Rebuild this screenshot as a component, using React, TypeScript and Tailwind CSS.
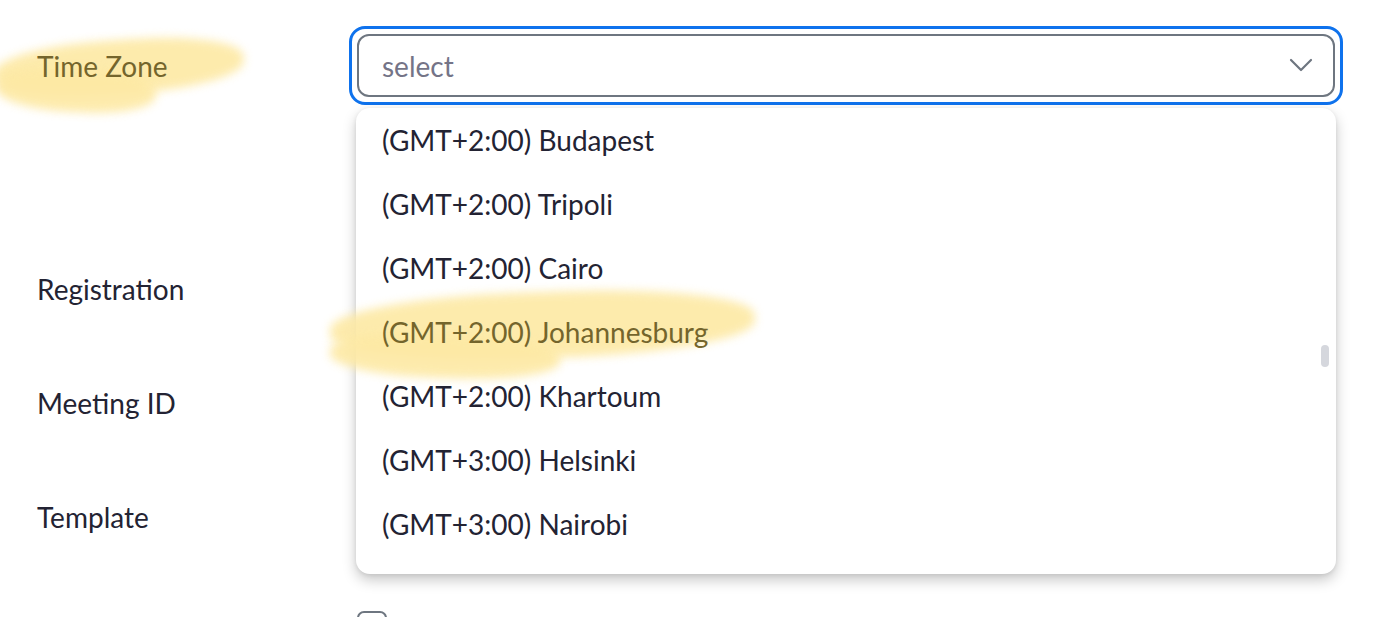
import React from 'react'

const options = [
  '(GMT+2:00) Budapest',
  '(GMT+2:00) Tripoli',
  '(GMT+2:00) Cairo',
  '(GMT+2:00) Johannesburg',
  '(GMT+2:00) Khartoum',
  '(GMT+3:00) Helsinki',
  '(GMT+3:00) Nairobi',
]

const Highlight = ({ className }: { className: string }) => (
  <div
    className={`absolute pointer-events-none rounded-[45%] bg-[#fde9a4] blur-[5px] opacity-90 ${className}`}
  />
)

export default function App() {
  return (
    <div className="relative h-[617px] w-[1400px] overflow-hidden bg-white font-['Lato','Liberation_Sans',sans-serif] text-[28px] text-[#232333]">
      {/* marker strokes behind the Time Zone label */}
      <Highlight className="left-[-6px] top-[40px] h-[54px] w-[250px] -rotate-[4deg]" />
      <Highlight className="left-[-4px] top-[68px] h-[44px] w-[160px] rotate-[3deg]" />

      <div className="relative pt-[26px]">
        {/* time zone row */}
        <div className="flex h-[78px] items-center">
          <div className="w-[349px] pl-[37px] pt-[2px]">
            <span className="text-[#74652c]">Time Zone</span>
          </div>
          <div className="relative w-[994px]">
            <div className="rounded-[16px] border-[3px] border-[#0e72ed] p-[5px]">
              <div className="flex h-[63px] items-center justify-between rounded-[12px] border-2 border-[#6e7680] pl-[23px] pr-[20px]">
                <span className="pt-[2px] text-[#747487]">select</span>
                <svg width="24" height="24" viewBox="0 0 24 24" fill="none" stroke="#6e7680" strokeWidth="2.2" strokeLinecap="round" strokeLinejoin="round">
                  <path d="M2 7l10 10L22 7" />
                </svg>
              </div>
            </div>

            {/* dropdown */}
            <div className="absolute left-[7px] top-[82px] z-10 w-[980px] rounded-[14px] bg-white pb-[18px] shadow-[0_6px_14px_rgba(0,0,0,0.22),0_1px_4px_rgba(0,0,0,0.08)]">
              {options.map((o) => (
                <div key={o} className="relative flex h-[64px] items-center pl-[26px]">
                  {o.includes('Johannesburg') ? (
                    <>
                      <Highlight className="left-[-26px] top-[-8px] h-[66px] w-[425px] -rotate-[2deg]" />
                      <Highlight className="left-[-26px] top-[34px] h-[44px] w-[230px] rotate-[2deg]" />
                      <span className="relative text-[#74652c]">{o}</span>
                    </>
                  ) : (
                    <span>{o}</span>
                  )}
                </div>
              ))}
              <div className="absolute right-[7px] top-[237px] h-[22px] w-[8px] rounded-full bg-[#d5d7dd]" />
            </div>
          </div>
        </div>

        {/* other rows */}
        <div className="mt-[128px] flex flex-col">
          <div className="flex h-[114px] items-center pl-[37px]">Registration</div>
          <div className="flex h-[114px] items-center pl-[37px]">Meeting ID</div>
          <div className="flex h-[114px] items-center pl-[37px]">Template</div>
          <div className="flex pl-[357px] pt-[37px]">
            <div className="h-[28px] w-[30px] rounded-[7px] border-2 border-[#6e7680]" />
          </div>
        </div>
      </div>
    </div>
  )
}
